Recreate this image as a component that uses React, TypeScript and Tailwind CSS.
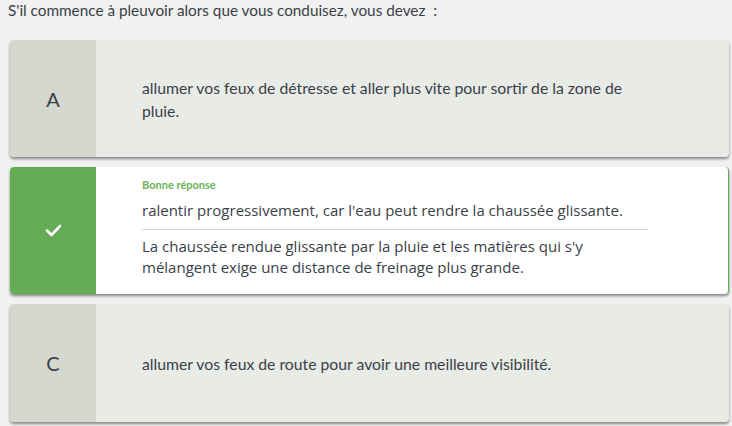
export default function App() {
  return (
    <div className="min-h-[426px] w-[732px] bg-[#f1f1f1] font-['Lato','Noto_Sans',sans-serif] text-[#3a3f47]">
      <p className="pl-[8px] pt-[0px] text-[15.3px] leading-[20px]">S'il commence à pleuvoir alors que vous conduisez, vous devez&nbsp; :</p>
      <div className="ml-[10px] mr-[3px] mt-[20px] flex flex-col gap-[10px]">
        <div className="flex h-[117px] overflow-hidden rounded-[4px] bg-[#e9ebe7] shadow-[0_2px_3px_rgba(0,0,0,0.45)]">
          <div className="flex w-[86px] shrink-0 items-center justify-center bg-[#d5d8ce] text-[20px] text-[#3a3f47]">A</div>
          <div className="flex items-center pl-[46px] pr-[90px]">
            <p className="text-[15.75px] leading-[23px]">allumer vos feux de détresse et aller plus vite pour sortir de la zone de pluie.</p>
          </div>
        </div>
        <div className="flex h-[127px] overflow-hidden rounded-[4px] border-r border-[#63ab55] bg-white shadow-[0_2px_3px_rgba(0,0,0,0.45)]">
          <div className="flex w-[86px] shrink-0 items-center justify-center bg-[#63ab55]">
            <svg width="17" height="13" viewBox="0 0 17 13" fill="none">
              <path d="M2 6.5 L6.5 11 L15 2" stroke="white" strokeWidth="2.6" strokeLinecap="round" strokeLinejoin="round" />
            </svg>
          </div>
          <div className="flex flex-col pl-[46px] pt-[11px]">
            <p className="text-[11px] font-bold leading-[14px] text-[#6cb35a]">Bonne réponse</p>
            <p className="mt-[8px] font-['Open_Sans','Noto_Sans',sans-serif] text-[15px] leading-[21px]">ralentir progressivement, car l'eau peut rendre la chaussée glissante.</p>
            <div className="mt-[8px] w-[506px] border-t border-[#d4d4d4]" />
            <p className="mt-[6px] w-[480px] font-['Open_Sans','Noto_Sans',sans-serif] text-[15px] leading-[21px]">La chaussée rendue glissante par la pluie et les matières qui s'y mélangent exige une distance de freinage plus grande.</p>
          </div>
        </div>
        <div className="flex h-[118px] overflow-hidden rounded-[4px] bg-[#e9ebe7] shadow-[0_2px_3px_rgba(0,0,0,0.45)]">
          <div className="flex w-[86px] shrink-0 items-center justify-center bg-[#d5d8ce] text-[20px] text-[#3a3f47]">C</div>
          <div className="flex items-center pl-[46px] pr-[90px]">
            <p className="text-[15.75px] leading-[23px]">allumer vos feux de route pour avoir une meilleure visibilité.</p>
          </div>
        </div>
      </div>
    </div>
  );
}
